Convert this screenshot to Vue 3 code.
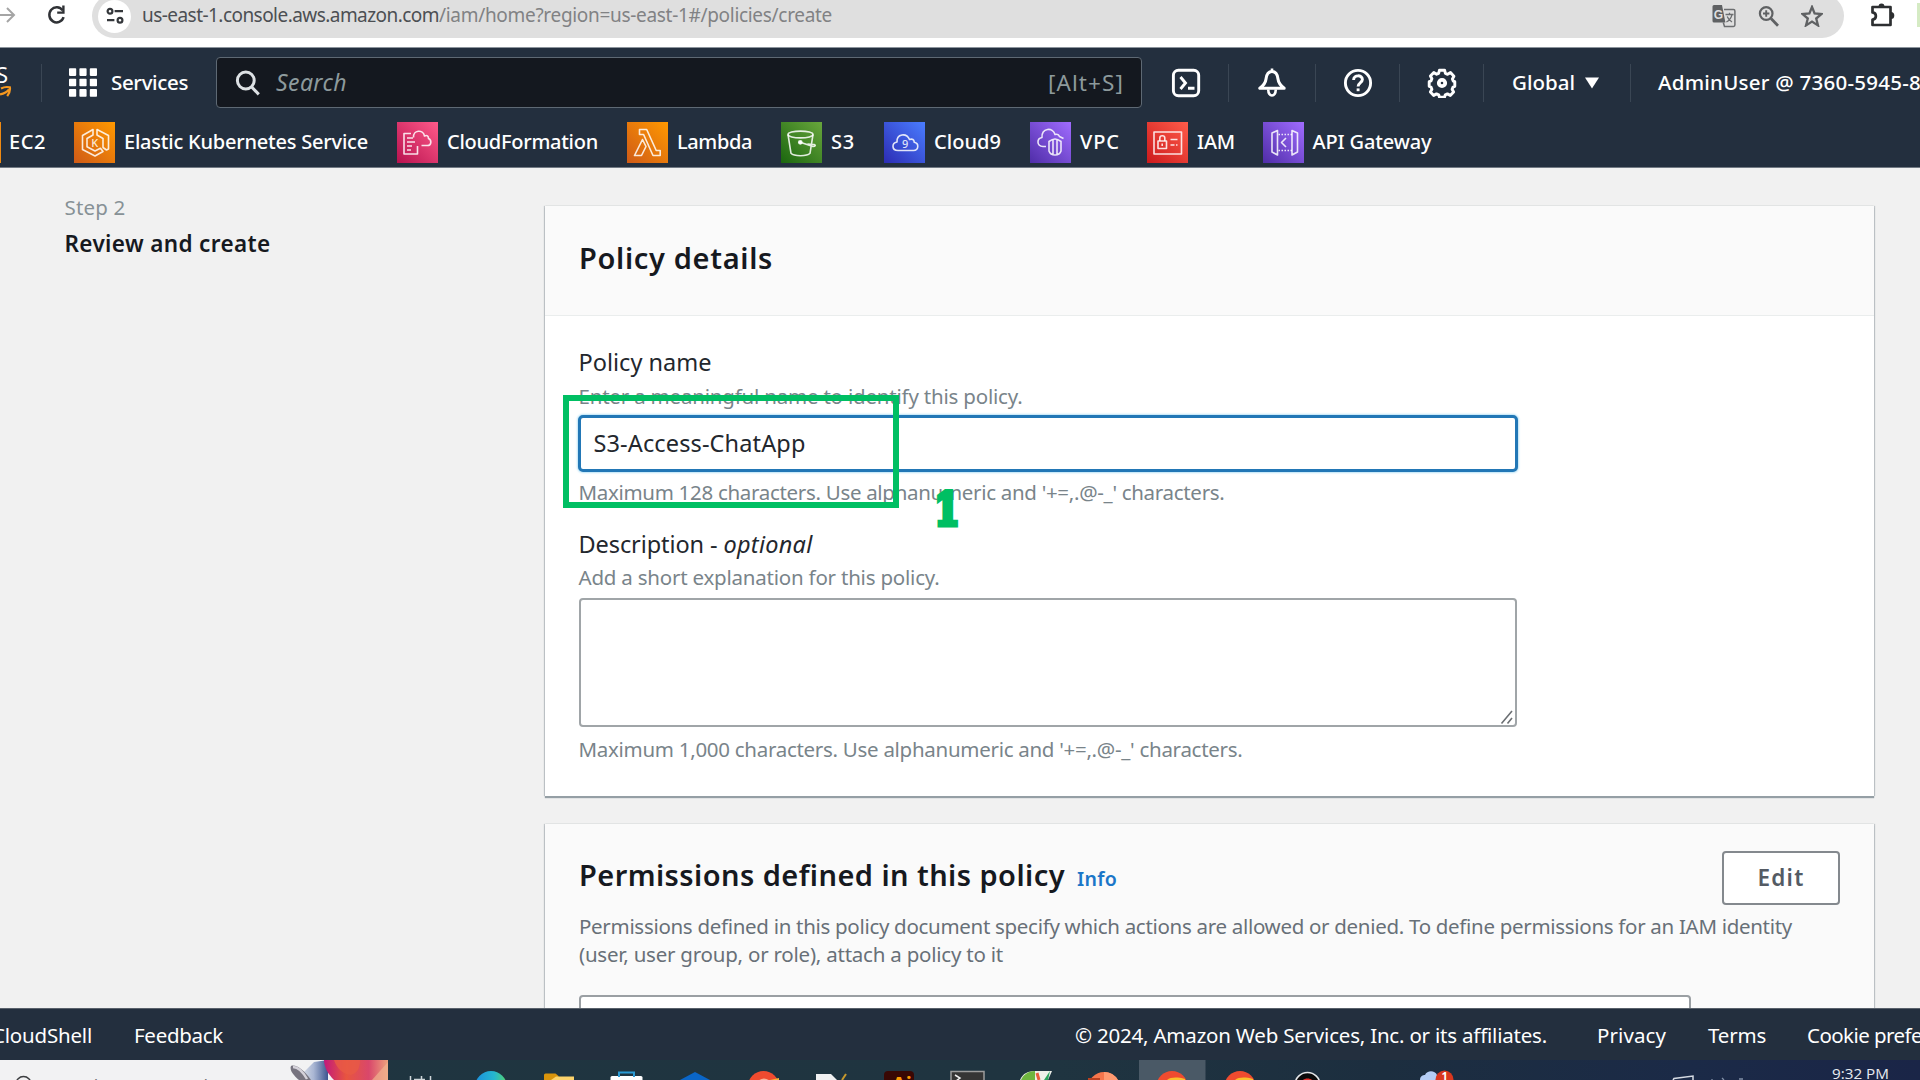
<script setup>
// Tunes letter-spacing so a single-line label occupies the given width.
const vFit = {
  mounted(el, { value }) {
    const natural = el.getBoundingClientRect().width
    const count = el.textContent.length
    el.style.letterSpacing = `${((value - natural) / count).toFixed(3)}px`
  },
}

const favorites = [
  { id: 'eks', label: 'Elastic Kubernetes Service', fit: 244, slot: 323, from: '#cf5a17', to: '#ff9900' },
  { id: 'cfn', label: 'CloudFormation', fit: 151, slot: 230, from: '#b8124f', to: '#ff5a8a' },
  { id: 'lambda', label: 'Lambda', fit: 75, slot: 154, from: '#cf5a17', to: '#ff9900' },
  { id: 's3', label: 'S3', fit: 24, slot: 103, from: '#1b660f', to: '#68a63c' },
  { id: 'cloud9', label: 'Cloud9', fit: 67, slot: 146, from: '#2c2cb4', to: '#4a7dff' },
  { id: 'vpc', label: 'VPC', fit: 40, slot: 117, from: '#4f2da8', to: '#a06cff' },
  { id: 'iam', label: 'IAM', fit: 38, slot: 115.5, from: '#cc1a1c', to: '#ff5c4a' },
  { id: 'api', label: 'API Gateway', fit: 119, slot: 180, from: '#4f2da8', to: '#a06cff' },
]
</script>

<template>
  <div class="screen">
    <div class="toolbar">
      <svg class="forward" width="18" height="30" viewBox="0 0 18 30"><path d="M0 15H14M7 8l7 7-7 7" fill="none" stroke="#a5a5a5" stroke-width="2" /></svg>
      <svg class="reload" width="20" height="22" viewBox="0 0 20 22">
        <path d="M16.6 13.2A7.3 7.6 0 1 1 15.6 6.4" fill="none" stroke="#303236" stroke-width="2.5" />
        <path d="M17.6 1.6v8.2h-7.4v-2.4h5V1.6z" fill="#303236" />
      </svg>
      <div class="omnibox">
        <span class="site-info">
          <svg width="18" height="18" viewBox="0 0 18 18" fill="none" stroke="#34373b" stroke-width="2.2">
            <circle cx="4" cy="4.2" r="2.4" /><path d="M8.6 4.2H17M1 13.2h7.4" /><circle cx="14" cy="13.2" r="2.4" />
          </svg>
        </span>
        <span class="url host" v-fit="297">us-east-1.console.aws.amazon.com</span>
        <span class="url path" v-fit="393">/iam/home?region=us-east-1#/policies/create</span>
        <div class="omni-icons">
          <svg width="24" height="24" viewBox="0 0 24 24">
            <path d="M2 1h8l3.4 17.500H2a1.500 1.500 0 0 1-1.500-1.500V2.500A1.500 1.500 0 0 1 2 1z" fill="#5f6163" />
            <path d="M12 5.500h9.500a1.400 1.400 0 0 1 1.400 1.400v14.200a1.400 1.400 0 0 1-1.400 1.400H12.500l-1.200-4" fill="none" stroke="#6c6e70" stroke-width="1.500" />
            <text x="1.800" y="14.500" class="gt" fill="#dfdfdf">G</text>
            <path d="M13.500 10.500h8M17.500 8.800v1.700M20 10.600c-.8 3.600-3 6-5.600 7.400M15.200 12.500c1 2.600 2.600 4.200 4.800 5.500" fill="none" stroke="#6c6e70" stroke-width="1.300" />
          </svg>
          <svg width="22" height="22" viewBox="0 0 22 22" fill="none" stroke="#5f6163">
            <circle cx="8.200" cy="8.500" r="6.300" stroke-width="2.200" /><path d="M13 13.500l7 7.200" stroke-width="2.800" /><path d="M8.200 5.300v6.400M5 8.500h6.400" stroke-width="1.900" />
          </svg>
          <svg width="22" height="22" viewBox="0 0 22 22"><path d="M11 2l2.600 6.500 7 .5-5.400 4.500 1.800 6.900-6-3.800-6 3.800 1.800-6.900L1.400 9l7-.5z" fill="none" stroke="#5f6163" stroke-width="2.300" /></svg>
        </div>
      </div>
      <svg class="puzzle" width="26" height="26" viewBox="0 0 26 26">
        <path d="M2.500 5H20.500V23H2.500V17.600C7 17.200 7 10.800 2.500 10.400Z" fill="none" stroke="#2d2f31" stroke-width="2.700" stroke-linejoin="round" />
        <path d="M8.500 5a3 3.400 0 0 1 6 0zM21 10a3.300 3.500 0 0 1 0 7z" fill="#2d2f31" />
      </svg>
      <span class="edge-mark"></span>
    </div>

    <header class="nav">
      <div class="nav-row">
        <div class="logo">
          <svg width="14" height="36" viewBox="0 0 14 36">
            <text x="-4" y="18" class="logo-s" fill="#fff">S</text>
            <path d="M0 29.500C4 28.500 7 27 9 24.500M1 23.500c3-1.600 6-1.800 8.800-1.200.6 2.800-.4 6-2.600 8.800" fill="none" stroke="#f6981f" stroke-width="2.200" />
          </svg>
        </div>
        <i class="rule"></i>
        <svg class="apps" width="28" height="29" viewBox="0 0 28 29" fill="#fff">
          <template v-for="r in 3" :key="r">
            <rect v-for="c in 3" :key="c" :x="(c - 1) * 10.4" :y="(r - 1) * 10.4 + .3" width="7.200" height="7.600" rx=".8" />
          </template>
        </svg>
        <span class="nav-text services" v-fit="77">Services</span>
        <div class="search">
          <svg width="26" height="26" viewBox="0 0 26 26" fill="none" stroke="#dde1e4" stroke-width="3"><circle cx="10.800" cy="10.500" r="8.400" /><path d="M16.400 16.800l7.400 7.600" /></svg>
          <em v-fit="71">Search</em>
          <span class="hint-key" v-fit="76">[Alt+S]</span>
        </div>
        <div class="cell shell">
          <svg width="30" height="30" viewBox="0 0 30 30" fill="none" stroke="#fff" stroke-width="2.900"><rect x="2.400" y="2.200" width="25.300" height="25.600" rx="5" /><path d="M9.500 9l5 6-5 6M17 20.300h6.500" /></svg>
        </div>
        <i class="rule"></i>
        <div class="cell bell">
          <svg width="30" height="32" viewBox="0 0 30 32" fill="none" stroke="#fff" stroke-width="3" stroke-linejoin="round"><path d="M15 4.500c-4 0-5.500 3-6 7.500C8.600 16 6.500 18.500 2.800 21.300h24.400C23.500 18.500 21.400 16 21 12c-.5-4.500-2-7.500-6-7.500z" /><path d="M15 1.500V5M11.300 22.500c-.3 8 7.700 8 7.400 0" stroke-width="2.600" /></svg>
        </div>
        <i class="rule"></i>
        <div class="cell help">
          <svg width="30" height="30" viewBox="0 0 30 30" fill="none" stroke="#fff" stroke-width="2.900"><circle cx="15" cy="15" r="12.600" /><path d="M10.600 12c0-5.600 8.800-5.400 8.800-.4 0 3-4.300 3.200-4.300 7" /><path d="M15.100 20.400v2.800" /></svg>
        </div>
        <i class="rule"></i>
        <div class="cell gear">
          <svg width="30" height="30" viewBox="0 0 30 30" fill="none" stroke="#fff" stroke-width="2.900" stroke-linejoin="round"><path d="M12.400 2.200h5.200l.8 3.200 2.200.9 2.900-1.700 3.400 3.600-1.500 2.800.8 2.100 1.600.6v4.600l-1.800.8-.9 2.200 1.500 2.700-3.300 3.400-2.900-1.500-2.100.9-.8 2.400h-5l-.8-2.400-2.200-.9-2.800 1.500-3.300-3.400 1.500-2.800-.9-2.200-1.800-.7v-4.600l1.800-.7.900-2.200-1.500-2.800 3.400-3.500 2.800 1.700 2.100-.9z" /><circle cx="15" cy="15" r="3.200" stroke-width="3.800" /></svg>
        </div>
        <i class="rule"></i>
        <div class="region">
          <span class="nav-text" v-fit="63">Global</span>
          <svg width="14" height="12" viewBox="0 0 14 12"><path d="M0 .5h14L7 11.500z" fill="#fff" /></svg>
        </div>
        <i class="rule"></i>
        <span class="nav-text account" v-fit="263">AdminUser @ 7360-5945-8</span>
      </div>

      <nav class="favorites">
        <div class="fav first"><span v-fit="37">EC2</span></div>
        <div v-for="f in favorites" :key="f.id" class="fav" :style="{ width: f.slot + 'px' }">
          <svg class="tile" width="41" height="41" viewBox="0 0 41 41">
            <defs><linearGradient :id="'g-' + f.id" x1="0" y1="1" x2="1" y2="0"><stop offset="0" :stop-color="f.from" /><stop offset="1" :stop-color="f.to" /></linearGradient></defs>
            <rect width="41" height="41" :fill="`url(#g-${f.id})`" />
            <g fill="none" stroke="#fff" stroke-opacity=".85" stroke-width="1.600" stroke-linejoin="round">
              <template v-if="f.id === 'eks'">
                <path d="M19 7.500L8.500 13.500v14L21 34l8-4.500-2.600-3.300L21 29l-8-4.300v-8.200l6-3.500zM23 7.500V13l6 3.500v9l3.500 2.500 2-1V13.500z" />
                <text x="17.300" y="25.300" class="glyph k" fill="#fff" fill-opacity=".85" stroke="none">K</text>
              </template>
              <template v-else-if="f.id === 'cfn'">
                <path d="M14 11.500H7V32h13.500V24M10 16h6M10 20h8M10 24h5M10 28h4M16.500 15.500c-.5-7.500 9.500-8.500 11-1.500 2.500-1.400 4 0 4 2.500 3.500 1.500 3 7-1 7H24.500" />
              </template>
              <template v-else-if="f.id === 'lambda'">
                <path d="M12.500 7.500h7.200l9.500 21h4v5h-7.200L16.600 12.500h-4.100zM15.500 17.500L7.500 33.500h7l4.500-9z" />
              </template>
              <template v-else-if="f.id === 's3'">
                <ellipse cx="19.500" cy="12.500" rx="12.500" ry="3.400" /><path d="M7 12.500l3 18.800c3 3.200 16 3.200 19 0L32 12.500M20 20.500l12 4c2.500 0 3-1.500 1-2l-6.500-.5" /><circle cx="19.300" cy="20.300" r="1.600" fill="#fff" />
              </template>
              <template v-else-if="f.id === 'cloud9'">
                <path d="M14 28.500c-6.500 0-6.500-7.500-1-8.500-.5-8.500 9.500-9.500 12.500-2.500 3-1 4.500.2 4.800 2.800 5 1 4.500 8.200-.8 8.200z" />
                <text x="18" y="25.500" class="glyph n" fill="#fff" fill-opacity=".85" stroke="none">9</text>
              </template>
              <template v-else-if="f.id === 'vpc'">
                <path d="M16 24.500h-3c-6.500-.4-6.500-8-1-9C11.500 5.500 23 5 25 12.500c2.500-.8 4 .5 4.500 2l4 2" /><path d="M19 19.500c2-1.500 4-2.500 6-2.500s4 1 6 2.500V29c-1 3-3 4-6 4s-5-1-6-4zM23 17.500V33M27 17.500V33" />
              </template>
              <template v-else-if="f.id === 'iam'">
                <rect x="7" y="10" width="27.500" height="22" /><rect x="11" y="19" width="8.500" height="7.500" /><path d="M12.800 19v-3c0-3 5-3 5 0v3M15.200 21.500V24M23.500 17.500h7M23.500 23h4M29 23h1.500" />
              </template>
              <template v-else>
                <path d="M14.500 8.500L9 11v19l5.500 3zM29 8.500l5.500 2.500v19L29 33z" /><path d="M15.500 12.500H29M15.500 28.500H29" stroke-dasharray="1.500 1.500" /><path d="M23 16l-4.500 4.500L23 25" />
              </template>
            </g>
          </svg>
          <span v-fit="f.fit">{{ f.label }}</span>
        </div>
      </nav>
    </header>

    <main class="content">
      <aside class="steps">
        <div class="step"><span v-fit="61">Step 2</span></div>
        <div class="step-title"><span v-fit="206">Review and create</span></div>
      </aside>

      <div class="column">
        <section class="panel details">
          <div class="panel-head"><h2><span v-fit="194">Policy details</span></h2></div>
          <div class="panel-body">
            <div class="label"><span v-fit="133">Policy name</span></div>
            <div class="help-text"><span v-fit="444">Enter a meaningful name to identify this policy.</span></div>
            <div class="input"><span v-fit="212">S3-Access-ChatApp</span></div>
            <div class="help-text limit"><span v-fit="646">Maximum 128 characters. Use alphanumeric and '+=,.@-_' characters.</span></div>
            <div class="label second"><span v-fit="145">Description - </span><em v-fit="89">optional</em></div>
            <div class="help-text"><span v-fit="361">Add a short explanation for this policy.</span></div>
            <div class="textarea">
              <svg width="14" height="16" viewBox="0 0 14 16" fill="none" stroke="#6b6f73" stroke-width="1.600"><path d="M1.500 14.500L12 2M7.500 14.500L12 9" /></svg>
            </div>
            <div class="help-text limit2"><span v-fit="664">Maximum 1,000 characters. Use alphanumeric and '+=,.@-_' characters.</span></div>
          </div>
          <div class="marker"></div>
          <span class="marker-num">1</span>
        </section>

        <section class="panel perms">
          <div class="perm-top">
            <h2><span v-fit="486">Permissions defined in this policy</span></h2>
            <a class="info"><span v-fit="40">Info</span></a>
            <div class="edit"><span v-fit="47">Edit</span></div>
          </div>
          <div class="perm-desc">
            <span v-fit="1213">Permissions defined in this policy document specify which actions are allowed or denied. To define permissions for an IAM identity</span>
            <span v-fit="424">(user, user group, or role), attach a policy to it</span>
          </div>
          <div class="filter"></div>
        </section>
      </div>
    </main>

    <footer class="footer">
      <span class="f-shell" v-fit="100">CloudShell</span>
      <span class="f-feed" v-fit="89">Feedback</span>
      <span class="f-copy" v-fit="472">© 2024, Amazon Web Services, Inc. or its affiliates.</span>
      <span class="f-priv" v-fit="69">Privacy</span>
      <span class="f-terms" v-fit="58">Terms</span>
      <span class="f-cookie" v-fit="115">Cookie prefe</span>
    </footer>

    <div class="taskbar">
      <svg width="1920" height="20" viewBox="0 0 1920 20">
        <defs>
          <linearGradient id="art" x1="0" x2="1"><stop offset="0" stop-color="#c2187c" /><stop offset=".35" stop-color="#e8553f" /><stop offset=".7" stop-color="#d9476b" /><stop offset="1" stop-color="#eda27d" /></linearGradient>
          <linearGradient id="fade" x1="0" x2="1"><stop offset="0" stop-color="#f2f2f3" /><stop offset=".55" stop-color="#a9b6d3" /><stop offset="1" stop-color="#3c558f" /></linearGradient>
          <linearGradient id="edge" x1="0" x2="1"><stop offset="0" stop-color="#1b8fdc" /><stop offset=".6" stop-color="#25b7cf" /><stop offset="1" stop-color="#55d36c" /></linearGradient>
        </defs>
        <rect width="388" height="20" fill="#f2f2f3" />
        <path d="M296 20L314 2l14-2v20z" fill="url(#fade)" />
        <path d="M291 6c5-2 13 4 20 14h-12c-5-4-10-10-8-14z" fill="#77747f" />
        <path d="M293 7c5 0 10 5 14 12" fill="none" stroke="#d5d2da" stroke-width="2.500" />
        <path d="M324 0h64v20h-54c-6-6-10-13-10-20z" fill="url(#art)" />
        <path d="M334 0c3 9 9 14 17 15 7-2 9-8 9-15z" fill="#e85a45" opacity=".8" />
        <path d="M372 20L388 2v18z" fill="#efb28f" opacity=".7" />
        <circle cx="23.500" cy="24" r="7.500" fill="none" stroke="#3d3f41" stroke-width="1.600" />
        <text x="49" y="33" class="type" fill="#777">Type here to search</text>
        <path d="M410.500 16v4M414 19.500h11M421.500 16v4M430.500 16v4" stroke="#cfd6d9" stroke-width="1.500" fill="none" />
        <circle cx="491" cy="27" r="16" fill="url(#edge)" />
        <path d="M544 20v-5q0-1.500 1.500-1.500h10l3 2.500v4z" fill="#d9940b" /><path d="M551 20l5-3.500h18V20z" fill="#fcd36b" />
        <rect x="610.500" y="16" width="32" height="8" rx="1.500" fill="#fff" /><path d="M619 17v-4.500h15V17" fill="none" stroke="#2b9bd5" stroke-width="2" />
        <path d="M680 20l15-8 15 8z" fill="#0a66c8" />
        <circle cx="763.500" cy="26.500" r="15.500" fill="#f04b2f" /><circle cx="764" cy="26.500" r="8" fill="#f9b49a" /><path d="M770 20h9v-2z" fill="#f9b13a" />
        <path d="M816 20v-6h15l6 6z" fill="#f0f1f2" /><path d="M842 20l4-6" stroke="#c79a2d" stroke-width="2" />
        <rect x="884" y="11" width="30" height="20" rx="4" fill="#390804" /><text x="892" y="31" class="ai" fill="#ff9a00">Ai</text>
        <rect x="951" y="11.500" width="33" height="20" fill="#353535" stroke="#9c9c9c" stroke-width="1.500" /><path d="M955 15l5 3-4 3" fill="none" stroke="#eee" stroke-width="1.500" />
        <path d="M1020 20c3-7 8-9 16-9h16l-4 9z" fill="#eef0e9" /><path d="M1021 20c2-5 7-9 14-9v9z" fill="#6fb53f" /><path d="M1037 13l2 7" stroke="#e95c3b" stroke-width="3" /><path d="M1050 11l-6 9h4z" fill="#2aa45c" />
        <circle cx="1104" cy="28" r="16" fill="#f5764c" /><path d="M1104 12a16 16 0 0 1 14 8h-14z" fill="#ff9a70" /><rect x="1088" y="18" width="12" height="3" fill="#b9401f" />
        <rect x="1139" width="66.500" height="20" fill="#4a5966" />
        <circle cx="1172" cy="26.500" r="15.500" fill="#f04b2f" /><path d="M1167 20c4-3 10-3 18-1v2z" fill="#fbc02d" />
        <circle cx="1240" cy="26.500" r="15.500" fill="#f04b2f" /><path d="M1235 20c4-3 10-3 18-1v2z" fill="#fbc02d" />
        <circle cx="1307.500" cy="25" r="12.500" fill="#0b0b0b" stroke="#e3e6e8" stroke-width="1.600" /><path d="M1303 20c2-2 7-2 9 0z" fill="#e5322d" />
        <path d="M1420 20c0-4 3-5 5-5 2-5 10-5 12 0l4 5z" fill="#b4cdf5" />
        <circle cx="1444.500" cy="19.500" r="9" fill="#d9371e" /><text x="1441.500" y="20" class="badge" fill="#fff">1</text>
        <path d="M1673 20l1-1.500 19-2.500v4" fill="none" stroke="#d6dbe3" stroke-width="1.500" />
        <path d="M1712 19v1M1722 18l2 2M1739 19h4" stroke="#8290a8" stroke-width="1.300" />
        <text x="1832" y="19.300" class="clock" fill="#e8ebf0" textLength="57" lengthAdjust="spacingAndGlyphs">9:32 PM</text>
      </svg>
    </div>
  </div>
</template>

<style>
html, body { margin: 0; overflow: hidden; background: #f1f1f1; }
</style>

<style scoped>
.screen { width: 1920px; height: 1080px; overflow: hidden; display: flex; flex-direction: column; font-family: "Noto Sans", "Open Sans", sans-serif; font-size: 20px; color: #16191f; background: #f1f1f1; }
.screen span, .screen em { white-space: pre; }
svg { display: block; flex: none; }

.toolbar { height: 47px; flex: none; display: flex; align-items: flex-start; background: #fff; border-bottom: 1px solid #8c949c; box-sizing: content-box; overflow: hidden; }
.forward { width: 18px; }
.reload { margin: 4px 0 0 29px; }
.omnibox { box-sizing: border-box; width: 1752px; height: 44px; margin: -6px 0 0 25px; border-radius: 22px; background: #dfdfdf; display: flex; align-items: center; padding-left: 6px; flex: none; }
.site-info { width: 33px; height: 33px; border-radius: 50%; background: #fff; display: flex; align-items: center; justify-content: center; margin-right: 11px; flex: none; }
.url { font-size: 19px; margin-top: -2px; }
.host { color: #4c4f53; }
.path { color: #818284; }
.omni-icons { display: flex; align-items: center; gap: 21.500px; margin-left: 880px; }
.gt { font: bold 12px "Liberation Sans", sans-serif; }
.puzzle { margin: 2px 0 0 26px; }
.edge-mark { width: 3px; height: 24px; margin: 3px 0 0 auto; background: #d5ebc4; flex: none; }

.nav { height: 120px; flex: none; background: #232f3e; border-bottom: 1px solid #727a84; box-sizing: border-box; overflow: hidden; }
.nav-row { height: 69px; display: flex; align-items: center; }
.logo { width: 41px; flex: none; }
.logo-s { font: 22px "Noto Sans", sans-serif; }
.rule { width: 1px; height: 38px; background: #3a4654; flex: none; }
.apps { margin-left: 27px; }
.nav-text { color: #fff; font-size: 20.500px; line-height: 28px; font-weight: 500; flex: none; margin-top: -1px; }
.services { margin-left: 14px; }
.search { box-sizing: border-box; width: 926px; height: 51px; margin-left: 28px; display: flex; align-items: center; padding: 0 17px 0 18px; background: #14181f; border: 1.500px solid #5e6974; border-radius: 4px; flex: none; }
.search em { margin-left: 15px; font-size: 23px; color: #8d9a9c; margin-top: -1px; }
.hint-key { margin-left: auto; font-size: 22.500px; color: #8d9a9c; margin-top: -1px; }
.cell { display: flex; flex: none; }
.shell { width: 57px; padding-left: 29px; }
.bell { width: 58px; padding-left: 28px; }
.help { width: 56px; padding-left: 27px; }
.gear { width: 56px; padding-left: 27px; }
.region { width: 118px; padding-left: 28px; display: flex; align-items: center; gap: 10px; flex: none; }
.account { margin-left: 27px; }
.favorites { display: flex; padding-top: 5px; }
.fav { display: flex; align-items: center; gap: 9px; color: #fff; font-size: 20px; line-height: 40px; font-weight: 500; flex: none; }
.fav span { margin-top: -2px; }
.first { width: 73px; border-left: 1px solid #ef8a12; gap: 0; padding-left: 0; }
.first span { margin-left: 8px; }
.glyph { font-family: "Noto Sans", sans-serif; }
.k { font-size: 11px; }
.n { font-size: 11px; }

.content { height: 840px; flex: none; display: flex; overflow: hidden; background: #f1f1f1; }
.steps { width: 544px; padding: 25px 0 0 64.500px; box-sizing: border-box; flex: none; }
.step { height: 28px; line-height: 28px; color: #879196; font-size: 20.500px; }
.step-title { margin-top: 7px; height: 32px; line-height: 32px; font-size: 22.500px; font-weight: 600; }
.column { width: 1330px; padding-top: 38px; display: flex; flex-direction: column; gap: 28px; flex: none; }
.panel { background: #fff; box-sizing: border-box; position: relative; box-shadow: 0 2px 1px #959fa5, -1px 0 1px #c3c7ca, 1px 0 1px #c3c7ca; flex: none; }
.details { height: 590px; margin-left: 1px; }
.perms { height: 260px; margin-left: 1px; background: #fafafa; padding: 28px 34px 0 34px; }
.panel-head { height: 110px; box-sizing: border-box; padding: 32px 34px; background: #fafafa; border-bottom: 1px solid #eaeded; }
h2 { margin: 0; font-size: 29px; line-height: 40px; font-weight: 600; }
.panel-body { padding: 31px 33px 0 33.500px; }
.label { height: 30px; line-height: 30px; font-size: 23.500px; margin-bottom: 5px; color: #23272d; }
.help-text { height: 28px; line-height: 28px; font-size: 20.500px; color: #79848a; }
.input { box-sizing: border-box; width: 940px; height: 57px; margin: 5px 0 0 -1px; border: 3px solid #2277b6; border-radius: 5px; box-shadow: 0 0 2px 1px #b9e3f7; background: #fff; line-height: 51px; font-size: 23.500px; padding-left: 13px; color: #23272d; }
.limit { margin-top: 6px; }
.second { margin-top: 23px; margin-bottom: 4px; }
.textarea { box-sizing: border-box; width: 938px; height: 129px; margin: 7px 0 0 .5px; border: 2px solid #a0a5a8; border-radius: 4px; background: #fff; display: flex; align-items: flex-end; justify-content: flex-end; }
.textarea svg { margin: 0 1px 0 0; }
.limit2 { margin-top: 8px; }
.marker { position: absolute; left: 18px; top: 189px; width: 336px; height: 113px; box-sizing: border-box; border: 6.500px solid #00bf63; }
.marker-num { position: absolute; left: 382px; top: 276px; width: 40px; text-align: center; font: bold 45px/56px "DejaVu Serif", serif; color: #00bf63; -webkit-text-stroke: 5px #00bf63; transform: scaleX(.8); }

.perm-top { height: 60px; display: flex; align-items: flex-start; }
.perm-top h2 { margin-top: 3px; }
.info { margin: 13px 0 0 12px; color: #1b76c8; font-size: 19.500px; line-height: 28px; font-weight: 600; }
.edit { box-sizing: border-box; width: 118px; height: 54px; margin: -1px 0 0 auto; border: 2px solid #84898e; border-radius: 4px; background: #fff; color: #545b64; font-size: 22.500px; font-weight: 600; line-height: 50px; text-align: center; }
.perm-desc { display: flex; flex-direction: column; align-items: flex-start; color: #687078; line-height: 28px; font-size: 20.500px; }
.filter { box-sizing: border-box; width: 1112px; height: 60px; margin-top: 27px; border: 2px solid #9a9fa3; border-radius: 4px; background: #fff; }

.footer { height: 52px; flex: none; display: flex; align-items: center; background: #232f3e; border-top: 1px solid #59616b; box-sizing: border-box; color: #fff; font-size: 20.500px; line-height: 28px; overflow: hidden; }
.footer span { flex: none; font-weight: 400; }
.f-shell { margin-left: -8px; }
.f-feed { margin-left: 42px; }
.f-copy { margin-left: 852px; }
.f-priv { margin-left: 50px; }
.f-terms { margin-left: 42px; }
.f-cookie { margin-left: 41px; }

.taskbar { height: 20px; flex: none; overflow: hidden; background: linear-gradient(90deg, #1f3540 0%, #1f3440 55%, #1c2e3f 72%, #1b2a47 88%, #1a2547 100%); }
.type { font: 18px "Open Sans", sans-serif; }
.ai { font: bold 20px "Open Sans", sans-serif; }
.badge { font: bold 11px "Open Sans", sans-serif; }
.clock { font: 15px "Open Sans", sans-serif; }
</style>
